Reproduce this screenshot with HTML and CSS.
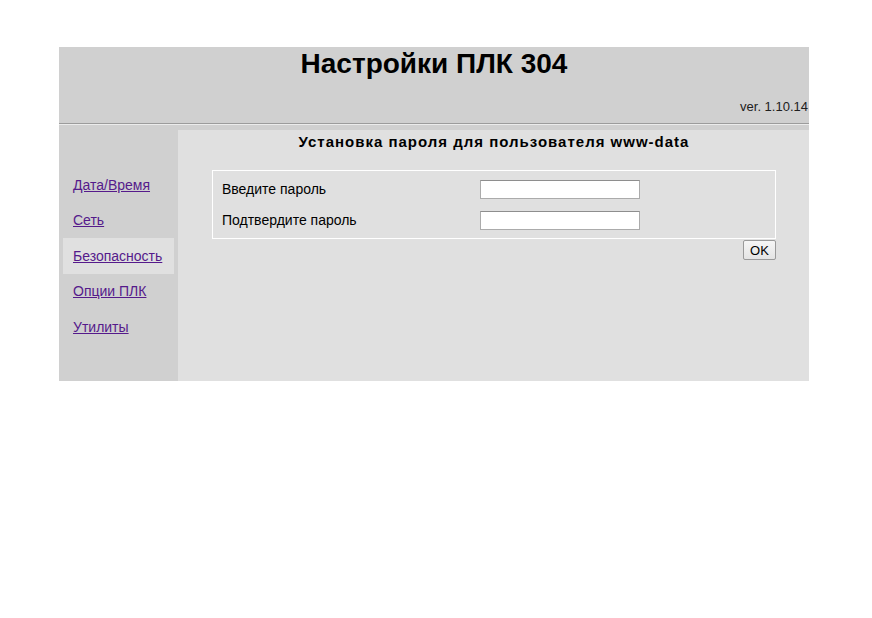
FILE: index.html
```html
<!DOCTYPE html>
<html lang="ru">
<head>
<meta charset="utf-8">
<title>Настройки ПЛК 304</title>
<link rel="stylesheet" href="styles.css">
</head>
<body>
<div class="page">
  <header class="top">
    <h1 class="title">Настройки ПЛК 304</h1>
    <div class="version">ver. 1.10.14</div>
  </header>
  <hr class="divider">
  <div class="main">
    <nav class="sidebar">
      <a class="nav-item" href="#">Дата/Время</a>
      <a class="nav-item" href="#">Сеть</a>
      <a class="nav-item active" href="#">Безопасность</a>
      <a class="nav-item" href="#">Опции ПЛК</a>
      <a class="nav-item" href="#">Утилиты</a>
    </nav>
    <section class="content">
      <h2 class="subtitle">Установка пароля для пользователя www-data</h2>
      <form class="pass-form">
        <div class="fields">
          <label class="field-label" for="p1">Введите пароль</label>
          <input class="field-input" id="p1" type="password">
          <label class="field-label" for="p2">Подтвердите пароль</label>
          <input class="field-input" id="p2" type="password">
        </div>
        <div class="actions">
          <button class="ok-btn" type="button">OK</button>
        </div>
      </form>
    </section>
  </div>
</div>
</body>
</html>
```
FILE: styles.css
```css
html, body {
  margin: 0;
  padding: 0;
  background: #ffffff;
}

body {
  font-family: "Liberation Sans", Arial, sans-serif;
  color: #000;
}

.page {
  width: 750px;
  margin: 47px 0 0 59px;
}

/* header band with title and version */
.top {
  background: #d0d0d0;
  height: 76px;
  display: flex;
  flex-direction: column;
}

.title {
  margin: 0;
  padding-top: 1px;
  font-size: 28px;
  line-height: 32px;
  font-weight: bold;
  text-align: center;
}

.version {
  margin-top: 19px;
  font-size: 13px;
  line-height: 15px;
  text-align: right;
  padding-right: 1px;
  color: #202020;
}

.divider {
  margin: 0;
  height: 0;
  border: none;
  border-top: 1px solid #9c9c9c;
  border-bottom: 1px solid #ececec;
}

.main {
  display: flex;
  background: #d0d0d0;
  height: 256px;
}

/* left navigation */
.sidebar {
  width: 119px;
  padding-top: 42px;
  display: flex;
  flex-direction: column;
}

.nav-item {
  display: flex;
  align-items: center;
  height: 35.5px;
  margin: 0 4px;
  padding-left: 10px;
  font-size: 14px;
  color: #551a8b;
  text-decoration: underline;
}

.nav-item.active {
  background: #e0e0e0;
}

/* right panel */
.content {
  flex: 1;
  margin-top: 5px;
  background: #e0e0e0;
  padding: 0 33px 0 34px;
}

.subtitle {
  margin: 0;
  padding-top: 3px;
  font-size: 15px;
  line-height: 18px;
  font-weight: bold;
  letter-spacing: 1px;
  text-align: center;
}

.pass-form {
  margin-top: 19px;
}

.fields {
  border: 1px solid #ffffff;
  display: grid;
  grid-template-columns: 258px 160px;
  row-gap: 12px;
  align-items: center;
  padding: 9px 0 8px 9px;
}

.field-label {
  font-size: 14px;
  line-height: 19px;
}

.field-input {
  box-sizing: border-box;
  width: 160px;
  height: 19px;
  margin: 0;
  padding: 0 2px;
  background: #fff;
  border: 1px solid #ababab;
  border-top-color: #8e8e8e;
}

.actions {
  display: flex;
  justify-content: flex-end;
  padding-top: 1px;
}

.ok-btn {
  box-sizing: border-box;
  width: 33px;
  height: 20px;
  padding: 0;
  font-family: "Liberation Sans", Arial, sans-serif;
  font-size: 13px;
  color: #000;
  background: linear-gradient(#f6f6f6, #e4e4e4);
  border: 1px solid #9a9a9a;
  border-radius: 2px;
}
```
